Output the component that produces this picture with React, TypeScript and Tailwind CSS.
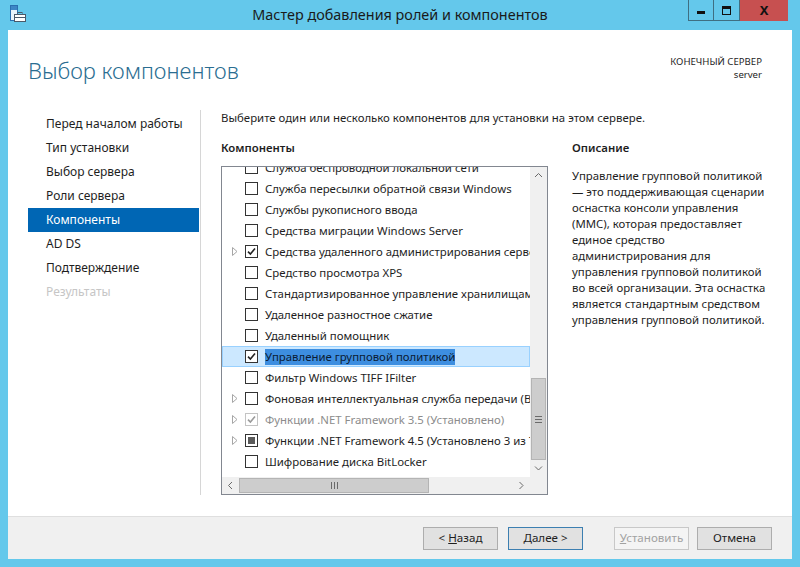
import React from 'react';

type Row = {
  label: string;
  state: 'off' | 'on' | 'mixed';
  expand?: boolean;
  disabled?: boolean;
  selected?: boolean;
};

const rows: Row[] = [
  { label: 'Служба беспроводной локальной сети', state: 'off' },
  { label: 'Служба пересылки обратной связи Windows', state: 'off' },
  { label: 'Службы рукописного ввода', state: 'off' },
  { label: 'Средства миграции Windows Server', state: 'off' },
  { label: 'Средства удаленного администрирования сервера', state: 'on', expand: true },
  { label: 'Средство просмотра XPS', state: 'off' },
  { label: 'Стандартизированное управление хранилищами Windows', state: 'off' },
  { label: 'Удаленное разностное сжатие', state: 'off' },
  { label: 'Удаленный помощник', state: 'off' },
  { label: 'Управление групповой политикой', state: 'on', selected: true },
  { label: 'Фильтр Windows TIFF IFilter', state: 'off' },
  { label: 'Фоновая интеллектуальная служба передачи (BITS)', state: 'off', expand: true },
  { label: 'Функции .NET Framework 3.5 (Установлено)', state: 'on', expand: true, disabled: true },
  { label: 'Функции .NET Framework 4.5 (Установлено 3 из 7)', state: 'mixed', expand: true },
  { label: 'Шифрование диска BitLocker', state: 'off' },
];

const steps = [
  'Перед началом работы',
  'Тип установки',
  'Выбор сервера',
  'Роли сервера',
  'Компоненты',
  'AD DS',
  'Подтверждение',
  'Результаты',
];

const description = [
  'Управление групповой политикой',
  '— это поддерживающая сценарии',
  'оснастка консоли управления',
  '(MMC), которая предоставляет',
  'единое средство',
  'администрирования для',
  'управления групповой политикой',
  'во всей организации. Эта оснастка',
  'является стандартным средством',
  'управления групповой политикой.',
];

const Checkbox = ({ state, disabled }: { state: Row['state']; disabled?: boolean }) => {
  const edge = disabled ? '#c4c4c4' : '#333333';
  const mark = disabled ? '#9a9a9a' : '#222222';
  return (
    <svg width="13" height="13" viewBox="0 0 13 13" className="shrink-0">
      <rect x="0.5" y="0.5" width="12" height="12" fill="#fff" stroke={edge} />
      {state === 'on' && (
        <path d="M3 6.6 L5.4 9 L10 3.6" fill="none" stroke={mark} strokeWidth="1.6" />
      )}
      {state === 'mixed' && <rect x="3" y="3" width="7" height="7" fill="#5a5a5a" />}
    </svg>
  );
};

const Expander = () => (
  <svg width="6" height="9" viewBox="0 0 6 9">
    <path d="M0.5 0.5 L5 4.5 L0.5 8.5 Z" fill="none" stroke="#a6a6a6" />
  </svg>
);

const Chevron = ({ dir }: { dir: 'up' | 'down' | 'left' | 'right' }) => {
  const d = {
    up: 'M1 5 L4.5 1.5 L8 5',
    down: 'M1 1.5 L4.5 5 L8 1.5',
    left: 'M5 1 L1.5 4.5 L5 8',
    right: 'M1.5 1 L5 4.5 L1.5 8',
  }[dir];
  const vertical = dir === 'up' || dir === 'down';
  return (
    <svg width={vertical ? 9 : 7} height={vertical ? 7 : 9} viewBox={vertical ? '0 0 9 7' : '0 0 7 9'}>
      <path d={d} fill="none" stroke="#6a6a6a" strokeWidth="1" />
    </svg>
  );
};

const WizardIcon = () => (
  <svg width="18" height="18" viewBox="0 0 18 18">
    <rect x="1.5" y="0.5" width="7" height="15" fill="#e9f4fb" stroke="#2a6fb0" />
    <rect x="2" y="1" width="6" height="4" fill="#3d86c6" />
    <rect x="5.5" y="9.5" width="11" height="7" fill="#ffffff" stroke="#4a5a6a" />
    <rect x="9" y="7.5" width="4" height="2" fill="none" stroke="#4a5a6a" />
    <line x1="5.5" y1="12.5" x2="16.5" y2="12.5" stroke="#4a5a6a" />
  </svg>
);

const WizardButton = ({
  children,
  focused,
  disabled,
}: {
  children: React.ReactNode;
  focused?: boolean;
  disabled?: boolean;
}) => (
  <button
    className={
      disabled
        ? 'w-[75px] h-[23px] border border-[#c8c8c8] bg-[#f4f4f4] text-[#a2a2a2] text-[11.6px]'
        : focused
          ? 'w-[75px] h-[23px] border border-[#3c7fb1] bg-[#e1e1e1] text-[#1e1e1e] text-[11.6px]'
          : 'w-[75px] h-[23px] border border-[#adadad] bg-[#e1e1e1] text-[#1e1e1e] text-[11.6px]'
    }
  >
    {children}
  </button>
);

export default function App() {
  return (
    <div className="w-[800px] h-[567px] bg-[#64c8eb] flex flex-col px-[8px] pb-[8px] font-['Noto_Sans',sans-serif] text-[#1e1e1e] overflow-hidden">
      {/* caption */}
      <div className="h-[30px] -mx-[8px] grid grid-cols-[1fr_auto_1fr]">
        <div className="pl-[9px] pt-[5px]">
          <WizardIcon />
        </div>
        <div className="pt-[5px] text-[14.4px] leading-[20px] text-[#1a1a1a]">
          Мастер добавления ролей и компонентов
        </div>
        <div className="flex justify-end pr-[12px]">
          <div className="w-[26px] h-[21px] border border-[#3f6f82] border-t-0 flex items-center justify-center">
            <div className="w-[8px] h-[3px] bg-[#111] mt-[4px]" />
          </div>
          <div className="w-[26px] h-[21px] border border-[#3f6f82] border-t-0 border-l-0 flex items-center justify-center">
            <div className="w-[9px] h-[9px] border border-[#111] border-t-[3px]" />
          </div>
          <div className="w-[48px] h-[21px] bg-[#c75050] flex items-center justify-center text-[13px] font-bold text-[#111]">
            X
          </div>
        </div>
      </div>

      <div className="flex-1 bg-white flex flex-col">
        {/* header */}
        <div className="h-[80px] flex justify-between">
          <div className="pl-[20px] pt-[24px] text-[22px] leading-[32px] font-light text-[#2a6d91]">
            Выбор компонентов
          </div>
          <div className="pr-[30px] pt-[25px] text-right text-[9.6px] leading-[13px] text-[#1e1e1e]">
            <div>КОНЕЧНЫЙ СЕРВЕР</div>
            <div>server</div>
          </div>
        </div>

        {/* body */}
        <div className="flex-1 flex">
          <div className="w-[192px] pl-[20px] pt-[2px] text-[12px]">
            {steps.map((step, i) => (
              <div
                key={step}
                className={
                  i === 4
                    ? 'h-[24px] w-[171px] pl-[18px] flex items-center bg-[#0066b4] text-white'
                    : i === 7
                      ? 'h-[24px] pl-[18px] flex items-center text-[#c6c6c6]'
                      : 'h-[24px] pl-[18px] flex items-center'
                }
              >
                {step}
              </div>
            ))}
          </div>
          <div className="w-px bg-[#d6d6d6] mb-[21px]" />

          <div className="flex-1 pl-[20px] text-[11.4px] leading-[16px]">
            <div>Выберите один или несколько компонентов для установки на этом сервере.</div>
            <div className="flex mt-[14px] gap-[24px]">
              {/* components */}
              <div className="w-[327px]">
                <div className="font-semibold">Компоненты</div>
                <div className="mt-[10px] w-[327px] h-[329px] border border-[#828790] grid grid-cols-[308px_17px] grid-rows-[310px_17px]">
                  <div className="overflow-hidden">
                    <div className="-mt-[10px]">
                      {rows.map((row) => (
                        <div
                          key={row.label}
                          className={
                            row.selected
                              ? 'h-[21px] flex items-center bg-[#cce8ff] border border-[#99d1ff] whitespace-nowrap'
                              : 'h-[21px] flex items-center border border-transparent whitespace-nowrap'
                          }
                        >
                          <div className="w-[22px] shrink-0 flex justify-center pl-[1px]">
                            {row.expand && <Expander />}
                          </div>
                          <Checkbox state={row.state} disabled={row.disabled} />
                          <span
                            className={
                              row.selected
                                ? 'ml-[7px] bg-[#3d8ee0] text-[#0b1b33]'
                                : row.disabled
                                  ? 'ml-[7px] text-[#8c8c8c]'
                                  : 'ml-[7px]'
                            }
                          >
                            {row.label}
                          </span>
                        </div>
                      ))}
                    </div>
                  </div>

                  {/* vertical scrollbar */}
                  <div className="bg-[#f0f0f0] flex flex-col">
                    <div className="h-[17px] flex items-center justify-center">
                      <Chevron dir="up" />
                    </div>
                    <div className="flex-1 flex flex-col justify-end">
                      <div className="h-[82px] mx-[1px] bg-[#cdcdcd] border border-[#b4b4b4] flex flex-col items-center justify-center gap-[2px]">
                        <div className="w-[7px] h-px bg-[#6a6a6a]" />
                        <div className="w-[7px] h-px bg-[#6a6a6a]" />
                        <div className="w-[7px] h-px bg-[#6a6a6a]" />
                      </div>
                    </div>
                    <div className="h-[17px] flex items-center justify-center">
                      <Chevron dir="down" />
                    </div>
                  </div>

                  {/* horizontal scrollbar */}
                  <div className="bg-[#f0f0f0] flex">
                    <div className="w-[17px] flex items-center justify-center">
                      <Chevron dir="left" />
                    </div>
                    <div className="flex-1 flex">
                      <div className="w-[190px] my-[1px] bg-[#cdcdcd] border border-[#b4b4b4] flex items-center justify-center gap-[2px]">
                        <div className="w-px h-[7px] bg-[#6a6a6a]" />
                        <div className="w-px h-[7px] bg-[#6a6a6a]" />
                        <div className="w-px h-[7px] bg-[#6a6a6a]" />
                      </div>
                    </div>
                    <div className="w-[17px] flex items-center justify-center">
                      <Chevron dir="right" />
                    </div>
                  </div>
                  <div className="bg-[#f0f0f0]" />
                </div>
              </div>

              {/* description */}
              <div className="flex-1">
                <div className="font-semibold">Описание</div>
                <div className="mt-[12px]">
                  {description.map((line) => (
                    <div key={line} className="whitespace-nowrap">
                      {line}
                    </div>
                  ))}
                </div>
              </div>
            </div>
          </div>
        </div>

        {/* footer */}
        <div className="h-[43px] bg-[#f0f0f0] border-t border-[#dfdfdf] flex items-center justify-end pr-[20px]">
          <WizardButton>
            &lt; <span className="underline">Н</span>азад
          </WizardButton>
          <div className="w-[10px]" />
          <WizardButton focused>
            <span className="underline">Д</span>алее &gt;
          </WizardButton>
          <div className="w-[31px]" />
          <WizardButton disabled>
            <span className="underline">У</span>становить
          </WizardButton>
          <div className="w-[8px]" />
          <WizardButton>Отмена</WizardButton>
        </div>
      </div>
    </div>
  );
}
